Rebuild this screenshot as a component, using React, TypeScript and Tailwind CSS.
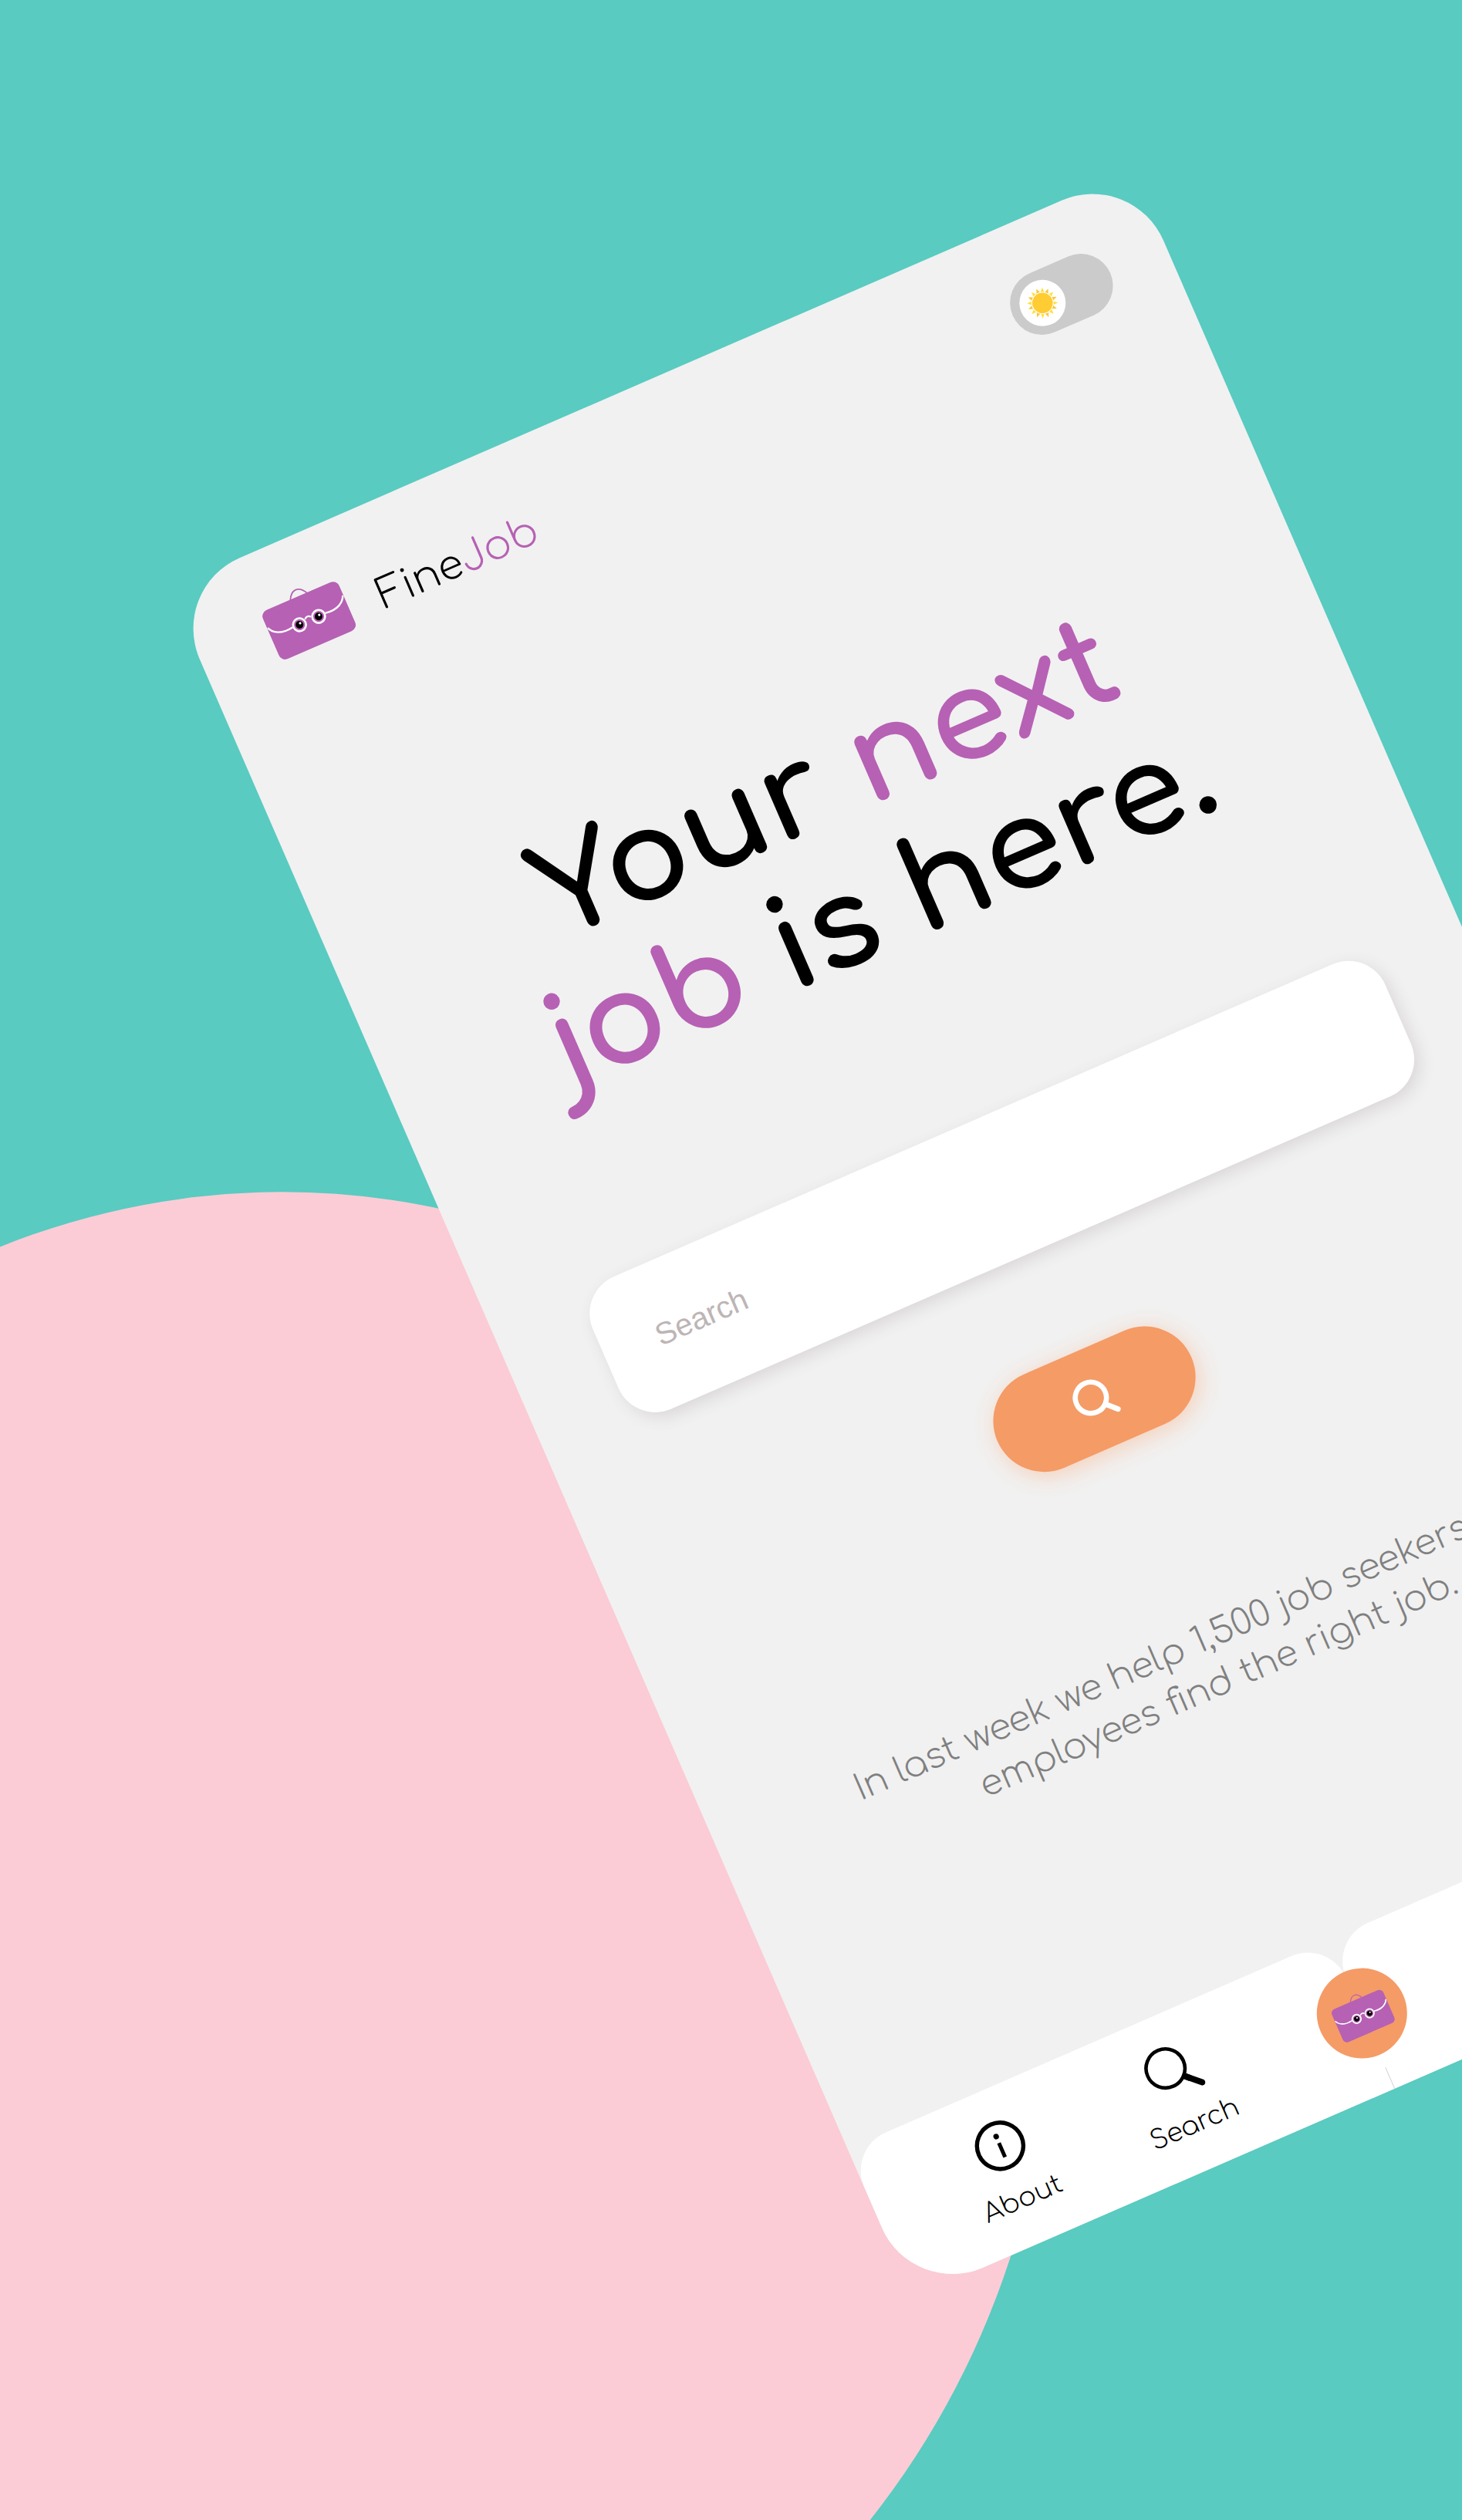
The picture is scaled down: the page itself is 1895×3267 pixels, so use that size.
import { useState } from "react";

const RAY_ANGLES = Array.from({ length: 16 }, (_, i) => i * 22.5);

function Briefcase({ className }: { className: string }) {
  return (
    <svg viewBox="0 0 108 82" className={className} aria-hidden="true">
      <path d="M42 13 C46 5 50 3 54 3 C58 3 62 5 66 13" fill="none" stroke="#b661b4" strokeWidth="1.8" />
      <rect x="0" y="12" width="108" height="69" rx="9" fill="#b661b4" />
      <path
        d="M1 34 C4 42 14 49 31 46 M77 46 C94 49 104 42 107 34 M50 43 C52 40 56 40 58 43"
        fill="none"
        stroke="#fff"
        strokeWidth="2.4"
      />
      {[40.5, 67.5].map((cx) => (
        <g key={cx}>
          <circle cx={cx} cy="46.5" r="8.4" fill="#b661b4" stroke="#fff" strokeWidth="2.6" />
          <circle cx={cx} cy="46.5" r="5" fill="#000" />
          <circle cx={cx + 1.5} cy="45" r="1.6" fill="#fff" />
        </g>
      ))}
    </svg>
  );
}

function Sun() {
  return (
    <svg viewBox="0 0 40 40" className="size-10" aria-hidden="true">
      <circle cx="20" cy="20" r="13.3" fill="#ffcc33" />
      {RAY_ANGLES.map((angle, i) => (
        <path
          key={angle}
          d="M20 0 L22.4 6 Q20 5 17.6 6 Z"
          fill={i % 2 ? "#ffe03a" : "#fbc53b"}
          transform={`rotate(${angle} 20 20)`}
        />
      ))}
    </svg>
  );
}

export default function App() {
  const [dark, setDark] = useState(false);
  return (
    <div className="relative min-h-screen overflow-hidden bg-[#59cbc1] pt-[763px] pl-[219px] font-['Comfortaa','Inter',sans-serif] text-black">
      <div className="absolute top-[1544px] left-[-661px] h-[2116px] w-[2023px] rotate-10 rounded-[50%] bg-[#fbccd6]" />

      <main className="relative flex w-[1362px] origin-top-left -rotate-[23.5deg] flex-col overflow-hidden rounded-[100px] bg-[#f1f1f1]">
        <header className="flex items-start justify-between pt-16 pr-20 pl-24">
          <a href="#" className="flex items-start gap-[42px]">
            <Briefcase className="w-[108px]" />
            <span className="mt-[25px] text-[53px] leading-[60px] font-light">
              Fine<span className="text-[#b661b4]">Job</span>
            </span>
          </a>
          <label className="mt-1.5 flex h-[83px] w-[138px] cursor-pointer items-center rounded-full bg-[#cbcbcb] px-3">
            <input
              type="checkbox"
              className="peer sr-only"
              aria-label="Dark mode"
              checked={dark}
              onChange={(e) => setDark(e.target.checked)}
            />
            <span className="flex size-[60px] items-center justify-center rounded-full bg-white peer-checked:ml-auto">
              <Sun />
            </span>
          </label>
        </header>

        <h1 className="mt-[324px] text-center text-[163px] leading-[182px] font-bold">
          Your <span className="text-[#b661b4]">next</span>
          <br />
          <span className="text-[#b661b4]">job</span> is here.
        </h1>

        <form className="mt-[207px] flex flex-col items-center" onSubmit={(e) => e.preventDefault()}>
          <input
            type="text"
            aria-label="Search"
            placeholder="Search"
            className="h-[187px] w-[1120px] rounded-[52px] bg-white px-[72px] font-['Liberation_Sans',sans-serif] text-[40px] shadow-[4px_8px_20px_#dbd7d9] outline-none placeholder:text-[#bdb5b5]"
          />
          <button
            type="submit"
            aria-label="Search"
            className="mt-[141px] flex h-[132px] w-[274px] items-center justify-center rounded-full bg-[#f59b66] shadow-[2px_6px_30px_#f5cfb8]"
          >
            <svg viewBox="0 0 56 56" className="size-14" fill="none" stroke="#fff" strokeLinecap="round" aria-hidden="true">
              <circle cx="24.5" cy="24.5" r="20.2" strokeWidth="6.6" />
              <path d="M41 42 L51 52" strokeWidth="7" />
            </svg>
          </button>
        </form>

        <p className="mt-[246px] text-center text-[46px] leading-[61px] font-light text-[#808080]">
          In last week we help 1,500 job seekers and
          <br />
          employees find the right job.
        </p>

        <nav className="relative mt-[330px] flex h-[211px]">
          <div className="grid w-1/2 grid-cols-[243px_243px] rounded-t-[54px] bg-white pt-10 pl-[61px] text-[34px] leading-[44px] font-light">
            <a href="#about" className="flex flex-col items-center gap-5">
              <svg viewBox="0 0 68 68" className="size-[68px]" aria-hidden="true">
                <circle cx="34" cy="35" r="30" fill="none" stroke="#000" strokeWidth="5.4" />
                <circle cx="34" cy="22" r="3.6" />
                <path d="M34 31 V51" stroke="#000" strokeWidth="5" />
              </svg>
              About
            </a>
            <a href="#search" className="flex flex-col items-center gap-5">
              <svg viewBox="0 0 68 68" className="size-[68px]" fill="none" stroke="#000" aria-hidden="true">
                <circle cx="27.5" cy="28.5" r="25.2" strokeWidth="4.6" />
                <path d="M47 48 L64 64" strokeWidth="8" strokeLinecap="round" />
                <path d="M45 46 L52 53" strokeWidth="8" />
              </svg>
              Search
            </a>
          </div>
          <div className="w-1/2 rounded-t-[54px] bg-white" />
          <div className="absolute inset-x-0 bottom-0 mx-auto h-[30px] w-px bg-gray-300" />
          <button
            type="button"
            aria-label="Home"
            className="absolute inset-x-0 top-[46px] mx-auto flex size-[117px] items-center justify-center rounded-full bg-[#f59b66]"
          >
            <Briefcase className="w-[73px]" />
          </button>
        </nav>
      </main>
    </div>
  );
}
